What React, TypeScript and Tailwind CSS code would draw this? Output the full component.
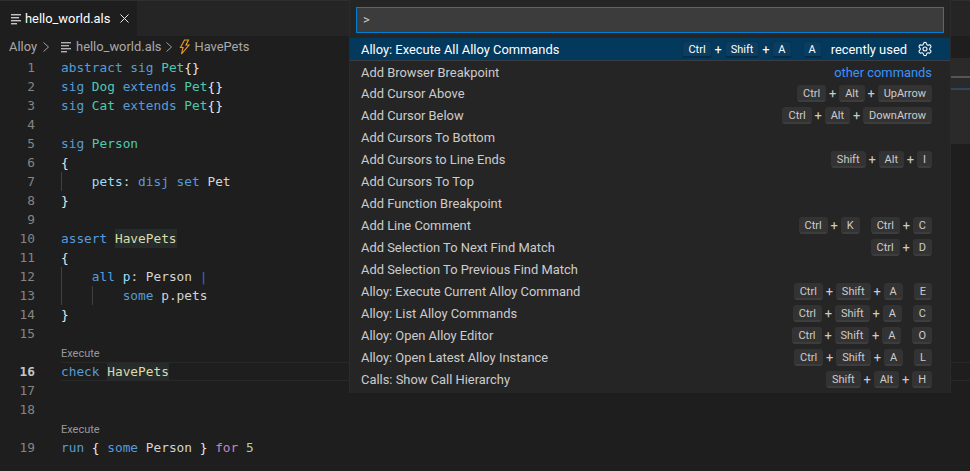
import React from 'react';
import { Settings, X } from 'lucide-react';

type Tok = [string, string];
const kw = 'text-[#569cd6]';
const ty = 'text-[#4ec9b0]';
const pl = 'text-[#d4d4d4]';
const br = 'text-[#e8e8e8]';
const ctl = 'text-[#c586c0]';
const num = 'text-[#b5cea8]';
const fn = 'text-[#dcdcaa]';
const vr = 'text-[#9cdcfe]';

type Line = { n?: number; toks?: Tok[]; lens?: boolean; current?: boolean; guides?: string[]; mark?: boolean };

const lines: Line[] = [
  { n: 1, toks: [['abstract sig ', kw], ['Pet', ty], ['{}', br]] },
  { n: 2, toks: [['sig ', kw], ['Dog ', ty], ['extends ', kw], ['Pet', ty], ['{}', br]] },
  { n: 3, toks: [['sig ', kw], ['Cat ', ty], ['extends ', kw], ['Pet', ty], ['{}', br]] },
  { n: 4 },
  { n: 5, toks: [['sig ', kw], ['Person', ty]] },
  { n: 6, toks: [['{', br]] },
  { n: 7, guides: ['left-[61px]'], toks: [['    ', pl], ['pets', vr], [': ', pl], ['disj set ', kw], ['Pet', pl]] },
  { n: 8, toks: [['}', br]] },
  { n: 9 },
  { n: 10, mark: true, toks: [['assert ', kw], ['HavePets', fn]] },
  { n: 11, toks: [['{', br]] },
  { n: 12, guides: ['left-[61px]'], toks: [['    ', pl], ['all ', kw], ['p', vr], [': ', pl], ['Person ', pl], ['|', 'text-[#2f6fd0]']] },
  { n: 13, guides: ['left-[61px]', 'left-[92px]'], toks: [['        ', pl], ['some ', kw], ['p.pets', pl]] },
  { n: 14, toks: [['}', br]] },
  { n: 15 },
  { lens: true },
  { n: 16, current: true, mark: true, toks: [['check ', kw], ['HavePets', fn]] },
  { n: 17 },
  { n: 18 },
  { lens: true },
  { n: 19, toks: [['run ', kw], ['{ ', br], ['some ', kw], ['Person ', pl], ['} ', br], ['for ', ctl], ['5', num]] },
];

type Cmd = { label: string; keys?: string[][]; note?: string };

const commands: Cmd[] = [
  { label: 'Add Browser Breakpoint', note: 'other commands' },
  { label: 'Add Cursor Above', keys: [['Ctrl', 'Alt', 'UpArrow']] },
  { label: 'Add Cursor Below', keys: [['Ctrl', 'Alt', 'DownArrow']] },
  { label: 'Add Cursors To Bottom' },
  { label: 'Add Cursors to Line Ends', keys: [['Shift', 'Alt', 'I']] },
  { label: 'Add Cursors To Top' },
  { label: 'Add Function Breakpoint' },
  { label: 'Add Line Comment', keys: [['Ctrl', 'K'], ['Ctrl', 'C']] },
  { label: 'Add Selection To Next Find Match', keys: [['Ctrl', 'D']] },
  { label: 'Add Selection To Previous Find Match' },
  { label: 'Alloy: Execute Current Alloy Command', keys: [['Ctrl', 'Shift', 'A'], ['E']] },
  { label: 'Alloy: List Alloy Commands', keys: [['Ctrl', 'Shift', 'A'], ['C']] },
  { label: 'Alloy: Open Alloy Editor', keys: [['Ctrl', 'Shift', 'A'], ['O']] },
  { label: 'Alloy: Open Latest Alloy Instance', keys: [['Ctrl', 'Shift', 'A'], ['L']] },
  { label: 'Calls: Show Call Hierarchy', keys: [['Shift', 'Alt', 'H']] },
];

const FileLines = ({ className }: { className: string }) => (
  <svg width="14" height="14" viewBox="0 0 14 14" className={className} fill="currentColor">
    <rect x="2" y="2" width="10" height="1.4" />
    <rect x="2" y="5" width="8" height="1.4" />
    <rect x="2" y="8" width="10" height="1.4" />
    <rect x="2" y="11" width="6" height="1.4" />
  </svg>
);

const Chevron = ({ className }: { className: string }) => (
  <svg width="10" height="12" viewBox="0 0 10 12" fill="none" stroke="currentColor" strokeWidth="1" className={`text-[#a0a0a0] ${className}`}>
    <path d="M2.5 1.5 7.5 6 2.5 10.5" />
  </svg>
);

const Bolt = () => (
  <svg width="12" height="16" viewBox="0 0 12 16" fill="none" stroke="#ee9d28" strokeWidth="1.1">
    <path d="M6.5 1h4L8 6h3L3.5 15 5 8.5H2.5z" />
  </svg>
);

const Keys = ({ chords, selected }: { chords: string[][]; selected?: boolean }) => (
  <div className="flex items-center gap-[11px]">
    {chords.map((chord, i) => (
      <div key={i} className="flex items-center">
        {chord.map((k, j) => (
          <React.Fragment key={k}>
            {j > 0 && (
              <span className={`w-[13px] text-center ${selected ? 'text-white' : 'text-[#cccccc]'}`}>+</span>
            )}
            <span
              className={
                selected
                  ? 'h-[17px] rounded-[3px] border border-b-2 border-[#0a3350] border-b-[#062c47] bg-[#0a3d60] px-[5px] text-[11px] leading-[15px] text-white'
                  : 'h-[17px] rounded-[3px] border border-b-2 border-[#333333] border-b-[#3d3d3d] bg-[#333333] px-[5px] text-[11px] leading-[15px] text-[#cccccc]'
              }
            >
              {k}
            </span>
          </React.Fragment>
        ))}
      </div>
    ))}
  </div>
);

export default function App() {
  return (
    <div className="relative h-[471px] w-[970px] overflow-hidden bg-[#1e1e1e] font-['Roboto','Noto_Sans',sans-serif] text-[12.9px]">
      {/* tab bar */}
      <div className="flex h-[36px] border-t border-[#2f2f2f] bg-[#252526]">
        <div className="flex w-[137px] items-center bg-[#1e1e1e] pl-[9px] text-white">
          <FileLines className="mr-[2px] text-[#c5c5c5]" />
          <span>hello_world.als</span>
          <X size={15} strokeWidth={1.6} className="ml-[7px] text-[#e8e8e8]" />
        </div>
      </div>

      {/* breadcrumbs */}
      <div className="flex h-[22px] items-center pl-[9px] text-[#a9a9a9]">
        <span>Alloy</span>
        <Chevron className="ml-[4px]" />
        <FileLines className="ml-[8px] mr-[3px] text-[#b0b0b0]" />
        <span>hello_world.als</span>
        <Chevron className="ml-[3px]" />
        <span className="ml-[4px] mr-[4px] flex"><Bolt /></span>
        <span>HavePets</span>
      </div>

      {/* scrolled-off overview widget, only its right end shows past the palette */}
      <div className="absolute right-0 top-[58px] h-[86px] w-[19px] bg-[#2a2a2a]">
        <div className="mt-[18px] h-[2px] bg-[#555555]" />
        <div className="mt-[10px] h-[2px] bg-[#2f4560]" />
      </div>

      {/* code */}
      <div className="font-['DejaVu_Sans_Mono',monospace] text-[12.8px]">
        {lines.map((l, i) =>
          l.lens ? (
            <div key={i} className="h-[19px] pl-[61px] pt-[3px] font-['Roboto',sans-serif] text-[11px] leading-[16px] text-[#999999]">
              Execute
            </div>
          ) : (
            <div key={i} className="relative flex h-[19px] items-center leading-[19px]">
              {l.guides?.map(g => (
                <span key={g} className={`absolute top-0 h-[19px] w-px bg-[#404040] ${g}`} />
              ))}
              <span className={`w-[35px] shrink-0 text-right ${l.current ? 'font-bold text-[#c6c6c6]' : 'text-[#858585]'}`}>
                {l.n}
              </span>
              <div
                className={`ml-[26px] h-[19px] flex-1 whitespace-pre ${l.current ? 'border-y border-[#282828] leading-[17px]' : ''}`}
              >
                {l.toks?.map(([t, c], j) => (
                  <span key={j} className={l.mark && t === 'HavePets' ? `${c} inline-block bg-[#262b2c]` : c}>
                    {t}
                  </span>
                ))}
              </div>
            </div>
          ),
        )}
      </div>

      {/* command palette */}
      <div className="absolute left-[349px] top-0 w-[602px] border-x border-[#2b2b2c] bg-[#252526] pb-[2px]">
        <div className="px-[6px] pb-[5px] pt-[7px]">
          <div className="flex h-[26px] items-center border border-[#007fd4] bg-[#3c3c3c] pl-[6px] text-[#cccccc]">&gt;</div>
        </div>
        <div className="flex h-[23px] items-center justify-between border-b border-[#3a3d41] bg-[#04395e] pl-[11px] pr-[17px] pt-[1px] text-white">
          <span>Alloy: Execute All Alloy Commands</span>
          <div className="flex items-center">
            <Keys chords={[['Ctrl', 'Shift', 'A'], ['A']]} selected />
            <span className="ml-[9px]">recently used</span>
            <Settings size={16} strokeWidth={1.6} className="ml-[10px]" />
          </div>
        </div>
        {commands.map((c, i) => (
          <div key={c.label} className={`flex h-[22px] items-center justify-between pl-[11px] pr-[18px] text-[#cccccc] ${i === 0 ? 'pt-[1px]' : ''}`}>
            <span>{c.label}</span>
            {c.note && <span className="text-[#3794ff]">{c.note}</span>}
            {c.keys && <Keys chords={c.keys} />}
          </div>
        ))}
      </div>
    </div>
  );
}
